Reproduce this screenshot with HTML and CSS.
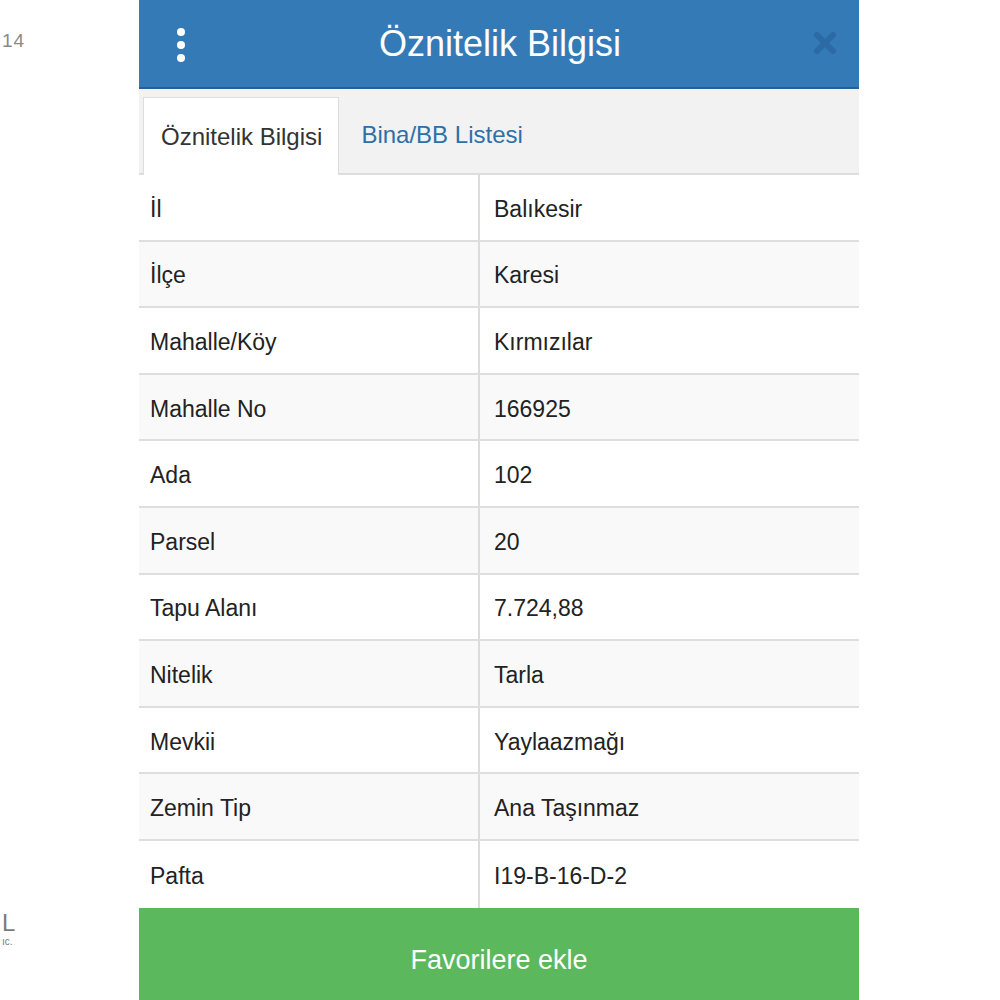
FILE: index.html
```html
<!DOCTYPE html>
<html lang="tr">
<head>
  <meta charset="UTF-8">
  <meta name="viewport" content="width=device-width, initial-scale=1.0">
  <title>Öznitelik Bilgisi</title>
  <link rel="stylesheet" href="styles.css">
</head>
<body>

  <div class="side">
    <div class="side-top">14</div>
    <div class="side-bottom">L<span>ıc.</span></div>
  </div>

  <div class="panel">
    <div class="panel-header">
      <span class="menu-btn">
        <svg width="14" height="36" viewBox="0 0 14 36">
          <circle cx="7" cy="5" r="4" fill="#ffffff"/>
          <circle cx="7" cy="18" r="4" fill="#ffffff"/>
          <circle cx="7" cy="31" r="4" fill="#ffffff"/>
        </svg>
      </span>
      <h1>Öznitelik Bilgisi</h1>
      <span class="close-btn">
        <svg width="26" height="26" viewBox="0 0 26 26">
          <path d="M5 5 L21 21 M21 5 L5 21" stroke="#2c6aa6" stroke-width="6" stroke-linecap="round"/>
        </svg>
      </span>
    </div>

    <div class="tabs">
      <div class="tab active">Öznitelik Bilgisi</div>
      <div class="tab">Bina/BB Listesi</div>
    </div>

    <div class="attr-table">
      <div class="row"><div class="cell key">İl</div><div class="cell val">Balıkesir</div></div>
      <div class="row"><div class="cell key">İlçe</div><div class="cell val">Karesi</div></div>
      <div class="row"><div class="cell key">Mahalle/Köy</div><div class="cell val">Kırmızılar</div></div>
      <div class="row"><div class="cell key">Mahalle No</div><div class="cell val">166925</div></div>
      <div class="row"><div class="cell key">Ada</div><div class="cell val">102</div></div>
      <div class="row"><div class="cell key">Parsel</div><div class="cell val">20</div></div>
      <div class="row"><div class="cell key">Tapu Alanı</div><div class="cell val">7.724,88</div></div>
      <div class="row"><div class="cell key">Nitelik</div><div class="cell val">Tarla</div></div>
      <div class="row"><div class="cell key">Mevkii</div><div class="cell val">Yaylaazmağı</div></div>
      <div class="row"><div class="cell key">Zemin Tip</div><div class="cell val">Ana Taşınmaz</div></div>
      <div class="row"><div class="cell key">Pafta</div><div class="cell val">I19-B-16-D-2</div></div>
    </div>

    <button class="fav-btn">Favorilere ekle</button>
  </div>

</body>
</html>
```

FILE: styles.css
```css
body {
  font-family: "Liberation Sans", Arial, sans-serif;
  background-color: #ffffff;
  margin: 0;
  display: flex;
  height: 1000px;
  overflow: hidden;
}
.side {
  width: 139px;
  flex-shrink: 0;
  display: flex;
  flex-direction: column;
  justify-content: space-between;
  color: #8a8a8a;
}
.side-top {
  font-size: 19px;
  margin-top: 30px;
  margin-left: 2px;
  letter-spacing: 1px;
}
.side-bottom {
  font-size: 24px;
  margin-bottom: 52px;
  margin-left: 2px;
  color: #7a7a7a;
  display: flex;
  flex-direction: column;
  line-height: 26px;
}
.side-bottom span {
  font-size: 10px;
  line-height: 12px;
}
.panel {
  width: 720px;
  display: flex;
  flex-direction: column;
  background-color: #ffffff;
}
.panel-header {
  height: 87px;
  background-color: #337ab7;
  border-bottom: 2px solid #24609a;
  display: flex;
  align-items: center;
  justify-content: space-between;
  padding: 0 21px 0 35px;
}
.panel-header h1 {
  margin: 0;
  color: #ffffff;
  font-size: 36px;
  font-weight: normal;
  padding-top: 1px;
}
.menu-btn {
  display: flex;
  margin-top: 3px;
}
.close-btn {
  display: flex;
  margin-top: -2px;
}
.tabs {
  height: 84px;
  background-color: #f2f2f2;
  border-bottom: 2px solid #dddddd;
  display: flex;
  align-items: flex-end;
  padding-left: 4px;
}
.tab {
  height: 76px;
  display: flex;
  align-items: center;
  padding: 0 17px 0 22px;
  font-size: 24px;
  color: #2f6fa7;
}
.tab.active {
  background-color: #ffffff;
  color: #333333;
  border: 1px solid #dddddd;
  border-bottom: none;
  margin-bottom: -2px;
  height: 77px;
  padding: 0 16px 0 17px;
}
.attr-table {
  display: flex;
  flex-direction: column;
}
.row {
  display: flex;
  height: 66.6px;
  box-sizing: border-box;
  border-bottom: 2px solid #dedede;
}
.row:nth-child(even) {
  background-color: #f9f9f9;
}
.row:last-child {
  border-bottom: none;
}
.cell {
  display: flex;
  align-items: center;
  font-size: 23px;
  color: #222222;
  padding-top: 4px;
}
.key {
  width: 341px;
  padding-left: 11px;
  box-sizing: border-box;
  border-right: 2px solid #dcdcdc;
}
.val {
  padding-left: 14px;
}
.fav-btn {
  height: 92px;
  border: none;
  background-color: #5cb85c;
  color: #ffffff;
  font-family: "Liberation Sans", Arial, sans-serif;
  font-size: 27px;
  cursor: pointer;
  padding: 14px 0 0;
}
```
